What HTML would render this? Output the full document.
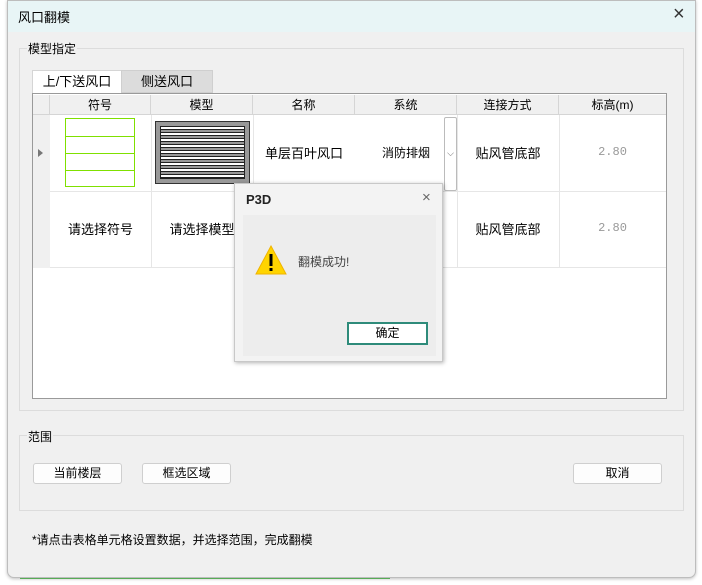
<!DOCTYPE html><html><head><meta charset="utf-8"><style>
*{margin:0;padding:0;box-sizing:border-box}
body{width:702px;height:585px;background:#fff;position:relative;overflow:hidden;font-family:"Liberation Sans","Noto Sans CJK SC",sans-serif;font-size:12px;color:#000}
.a{position:absolute}
.dlg{left:7px;top:0;width:689px;height:578px;background:#f0f0f0;border:1px solid #bdbdbd;border-radius:0 0 7px 7px;box-shadow:0 1px 3px rgba(0,0,0,.25)}
.grp{border:1px solid #dcdcdc}
.lbl{background:#f0f0f0;padding:0 1px;font-size:12px}
.btn{background:#fdfdfd;border:1px solid #cfcfcf;border-radius:3px;text-align:center;line-height:19px;font-size:12px}
.hd{top:95px;height:20px;line-height:20px;text-align:center;border-right:1px solid #d5d5d5;background:#f0f0f0;border-bottom:1px solid #d5d5d5}
.c{text-align:center;font-size:12px}
</style></head><body>
<div class="a" style="left:20px;top:578px;width:370px;height:7px;border-top:1px solid #6c6;"></div>
<div class="a dlg">
<div class="a" style="left:0;top:0;width:687px;height:31px;background:#e8f5f6"></div>
<div class="a" style="left:10px;top:6px;font-size:13px">风口翻模</div>
<div class="a" style="left:665px;top:2px;font-size:20px;color:#333">×</div>
</div>
<div class="a grp" style="left:19px;top:48px;width:665px;height:363px"></div>
<div class="a lbl" style="left:27px;top:40px">模型指定</div>
<div class="a" style="left:32px;top:70px;width:90px;height:23px;background:#fff;border:1px solid #d5d5d5;border-bottom:none;text-align:center;line-height:22px;font-size:13px">上/下送风口</div>
<div class="a" style="left:121px;top:70px;width:92px;height:23px;background:#dcdcdc;border:1px solid #cfcfcf;text-align:center;line-height:22px;font-size:13px">侧送风口</div>
<div class="a" style="left:32px;top:93px;width:635px;height:306px;background:#fff;border:1px solid #9a9a9a"></div>
<div class="a hd" style="left:33px;width:17px"></div>
<div class="a hd" style="left:50px;width:101px">符号</div>
<div class="a hd" style="left:151px;width:102px">模型</div>
<div class="a hd" style="left:253px;width:102px">名称</div>
<div class="a hd" style="left:355px;width:102px">系统</div>
<div class="a hd" style="left:457px;width:102px">连接方式</div>
<div class="a hd" style="left:559px;width:107px;border-right:none">标高(m)</div>
<div class="a" style="left:33px;top:115px;width:17px;height:153px;background:#f0f0f0"></div>
<div class="a" style="left:38px;top:149px;width:0;height:0;border-left:5px solid #777;border-top:4px solid transparent;border-bottom:4px solid transparent"></div>
<div class="a" style="left:50px;top:191px;width:616px;border-top:1px solid #e6e6e6"></div>
<div class="a" style="left:50px;top:267px;width:616px;border-top:1px solid #e6e6e6"></div>
<div class="a" style="left:151px;top:115px;height:152px;border-left:1px solid #e6e6e6"></div>
<div class="a" style="left:253px;top:115px;height:152px;border-left:1px solid #e6e6e6"></div>
<div class="a" style="left:457px;top:115px;height:152px;border-left:1px solid #e6e6e6"></div>
<div class="a" style="left:559px;top:115px;height:152px;border-left:1px solid #e6e6e6"></div>
<div class="a" style="left:65px;top:118px;width:70px;height:69px;border:1px solid #7fe000;background:linear-gradient(#7fe000,#7fe000) 0 17px/100% 1px no-repeat,linear-gradient(#7fe000,#7fe000) 0 34px/100% 1px no-repeat,linear-gradient(#7fe000,#7fe000) 0 51px/100% 1px no-repeat"></div>
<div class="a" style="left:155px;top:121px;width:95px;height:63px;border:1px solid #333;background:#999;padding:4px">
<div style="width:100%;height:100%;border:1px solid #222;background:repeating-linear-gradient(#fff 0 2px,#222 2px 3px,#999 3px 5px,#222 5px 6px)"></div></div>
<div class="a c" style="left:253px;top:143px;width:102px;font-size:13px">单层百叶风口</div>
<div class="a c" style="left:355px;top:144px;width:102px">消防排烟</div>
<div class="a" style="left:444px;top:117px;width:13px;height:74px;border:1px solid #bbb;border-radius:2px;background:#fff;color:#666;font-size:9px;text-align:center;line-height:70px">⌵</div>
<div class="a c" style="left:457px;top:143px;width:102px;font-size:13px">贴风管底部</div>
<div class="a c" style="left:559px;top:145px;width:107px;color:#999;font-family:'Liberation Mono',monospace">2.80</div>
<div class="a c" style="left:50px;top:219px;width:101px;font-size:13px">请选择符号</div>
<div class="a c" style="left:151px;top:219px;width:102px;font-size:13px">请选择模型</div>
<div class="a c" style="left:457px;top:219px;width:102px;font-size:13px">贴风管底部</div>
<div class="a c" style="left:559px;top:221px;width:107px;color:#999;font-family:'Liberation Mono',monospace">2.80</div>
<div class="a grp" style="left:19px;top:435px;width:665px;height:76px"></div>
<div class="a lbl" style="left:27px;top:428px">范围</div>
<div class="a btn" style="left:33px;top:463px;width:89px;height:21px">当前楼层</div>
<div class="a btn" style="left:142px;top:463px;width:89px;height:21px">框选区域</div>
<div class="a btn" style="left:573px;top:463px;width:89px;height:21px">取消</div>
<div class="a" style="left:32px;top:531px;font-size:12px">*请点击表格单元格设置数据，并选择范围，完成翻模</div>
<div class="a" style="left:234px;top:183px;width:209px;height:179px;background:#f3f3f3;border:1px solid #c8c8c8;box-shadow:1px 1px 4px rgba(0,0,0,.3)">
<div class="a" style="left:11px;top:8px;font-weight:bold;font-size:13px;color:#222">P3D</div>
<div class="a" style="left:187px;top:5px;font-size:15px;color:#666">×</div>
<div class="a" style="left:8px;top:31px;width:193px;height:141px;background:#ededed"></div>
<svg class="a" style="left:20px;top:61px" width="32" height="30"><polygon points="16,1 31,29 1,29" fill="#ffd400" stroke="#f0b400"/><rect x="14.5" y="9" width="3" height="12" fill="#000"/><rect x="14.5" y="23" width="3" height="3" fill="#000"/></svg>
<div class="a" style="left:63px;top:69px;color:#444;font-size:12px">翻模成功!</div>
<div class="a" style="left:112px;top:138px;width:81px;height:23px;border:2px solid #2e8b7a;background:#fff;text-align:center;line-height:19px">确定</div>
</div>
</body></html>
